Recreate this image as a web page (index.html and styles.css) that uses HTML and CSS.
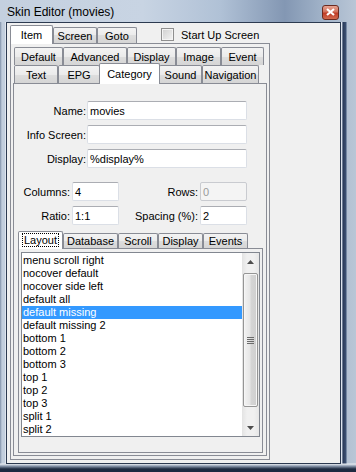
FILE: index.html
```html
<!DOCTYPE html>
<html lang="en">
<head>
  <meta charset="UTF-8">
  <title>Skin Editor (movies)</title>
  <link rel="stylesheet" href="styles.css">
</head>
<body>

<div class="window">
  <!-- Title bar -->
  <div class="titlebar">
    <span class="title">Skin Editor (movies)</span>
    <span class="close-btn">
      <svg width="9" height="8" viewBox="0 0 9 8"><path d="M1 1 L8 7 M8 1 L1 7" stroke="#fff" stroke-width="2.2"/></svg>
    </span>
  </div>

  <div class="client">
    <div class="main-tabs">
      <div class="tabstrip">
        <div class="tab tab-item selected">Item</div>
        <div class="tab tab-screen">Screen</div>
        <div class="tab tab-goto">Goto</div>
        <div class="check"><span class="check-box"></span>Start Up Screen</div>
      </div>

      <div class="panel item-panel">
        <!-- Category tab rows -->
        <div class="tabrow row-top">
          <div class="tab w-default">Default</div>
          <div class="tab w-advanced">Advanced</div>
          <div class="tab w-display">Display</div>
          <div class="tab w-image">Image</div>
          <div class="tab w-event">Event</div>
        </div>
        <div class="tabrow row-bottom">
          <div class="tab w-text">Text</div>
          <div class="tab w-epg">EPG</div>
          <div class="tab w-category selected">Category</div>
          <div class="tab w-sound">Sound</div>
          <div class="tab w-navigation">Navigation</div>
        </div>

        <div class="panel category-panel">
          <div class="fields">
            <label>Name:</label><div class="textbox">movies</div>
            <label>Info Screen:</label><div class="textbox"></div>
            <label>Display:</label><div class="textbox">%display%</div>
          </div>

          <div class="numbers">
            <label>Columns:</label><div class="textbox">4</div>
            <label>Rows:</label><div class="textbox disabled">0</div>
            <label>Ratio:</label><div class="textbox">1:1</div>
            <label>Spacing (%):</label><div class="textbox">2</div>
          </div>

          <div class="layout-tabs">
            <div class="tabrow small">
              <div class="tab w-layout selected"><span class="focus">Layout</span></div>
              <div class="tab w-database">Database</div>
              <div class="tab w-scroll">Scroll</div>
              <div class="tab w-display2">Display</div>
              <div class="tab w-events">Events</div>
            </div>
            <div class="panel layout-panel">
              <div class="listbox">
                <div class="items" id="items"></div>
                <div class="scrollbar">
                  <div class="sb-btn">
                    <svg width="7" height="4" viewBox="0 0 7 4"><path d="M0 4 L3.5 0 L7 4 Z" fill="#4d4d4d"/></svg>
                  </div>
                  <div class="sb-track">
                    <div class="sb-thumb">
                      <span class="grip"></span><span class="grip"></span><span class="grip"></span><span class="grip"></span>
                    </div>
                  </div>
                  <div class="sb-btn">
                    <svg width="7" height="4" viewBox="0 0 7 4"><path d="M0 0 L7 0 L3.5 4 Z" fill="#4d4d4d"/></svg>
                  </div>
                </div>
              </div>
            </div>
          </div>
        </div>
      </div>
    </div>
    <div class="side"></div>
  </div>
</div>

<script>
  const layouts = [
    "menu scroll right", "nocover default", "nocover side left", "default all",
    "default missing", "default missing 2", "bottom 1", "bottom 2", "bottom 3",
    "top 1", "top 2", "top 3", "split 1", "split 2"
  ];
  const selectedIndex = 4;

  const list = document.getElementById('items');
  layouts.forEach((name, i) => {
    const row = document.createElement('div');
    row.className = i === selectedIndex ? 'item selected' : 'item';
    row.textContent = name;
    list.appendChild(row);
  });
</script>

</body>
</html>
```

FILE: styles.css
```css
* {
  box-sizing: border-box;
}

body {
  margin: 0;
  width: 356px;
  height: 472px;
  overflow: hidden;
  font-family: "Liberation Sans", Arial, sans-serif;
  font-size: 11px;
  color: #000;
}

.window {
  height: 472px;
  display: flex;
  flex-direction: column;
  background:
    linear-gradient(to bottom, rgba(0,0,0,0) 463px, #e9edf2 464px, #8d9bb0 466px, #1d2a40 469px),
    linear-gradient(90deg, rgba(0,0,0,0) 342px, #2a3a58 343px, #3d5275 346px, rgba(0,0,0,0) 347px),
    linear-gradient(90deg, #7f90a8 0px, #c2cedd 2px, #c5d1e0 40%, #b3c3d7 62%, #8397b3 80%, #a2b3c9 90%, #b9c6d6 100%);
}

.titlebar {
  height: 22px;
  display: flex;
  align-items: center;
  padding-left: 7px;
  flex-shrink: 0;
  background: linear-gradient(90deg, #c4d0df, #c8d4e3 40%, #b0c1d6 62%, #8397b3 80%, #9fb1c7 90%, #b9c6d6);
}

.title {
  font-size: 12px;
  color: #000;
  padding-top: 1px;
}

.close-btn {
  margin-left: auto;
  margin-right: 17px;
  margin-top: 2px;
  width: 17px;
  height: 15px;
  border: 1px solid #6b2a20;
  border-radius: 3px;
  background: linear-gradient(#e8a493, #d0705b 45%, #bf3b26 55%, #d16a4f);
  display: flex;
  align-items: center;
  justify-content: center;
}

.client {
  flex: 1;
  margin: 0 15px 8px 6px;
  border: 1px solid #2c3a50;
  box-shadow: 1px 0 0 #dfe5ee, -1px 0 0 #dfe5ee;
  background: #f0f0f0;
  display: flex;
  padding: 0 0 3px 3px;
}

.main-tabs {
  width: 260px;
  display: flex;
  flex-direction: column;
}

.side {
  flex: 1;
}

/* tabs */

.tabstrip {
  height: 20px;
  display: flex;
  align-items: flex-end;
  flex-shrink: 0;
}

.tab {
  height: 16px;
  border: 1px solid #898c95;
  border-bottom: none;
  border-radius: 2px 2px 0 0;
  background: linear-gradient(#f3f3f3, #ebebeb 50%, #dedede 50%, #d5d5d5);
  display: flex;
  align-items: center;
  justify-content: center;
  white-space: nowrap;
}

.tab.selected {
  height: 19px;
  background: #fff;
  position: relative;
  z-index: 1;
  margin-bottom: -1px;
  padding-bottom: 1px;
}

.tab-item { width: 43px; }
.tab-screen { width: 44px; }
.tab-goto { width: 40px; }

.tabstrip .tab {
  padding-top: 1px;
}

.check {
  display: flex;
  align-items: center;
  align-self: center;
  margin-left: 24px;
  margin-top: 3px;
}

.check-box {
  width: 13px;
  height: 13px;
  border: 1px solid #8f8f8f;
  background: linear-gradient(135deg, #cfcfcf, #f4f4f4);
  box-shadow: inset 0 0 0 1px #f4f4f4;
  margin-right: 7px;
}

.panel {
  border: 1px solid #898c95;
  background: #f0f0f0;
}

.item-panel {
  flex: 1;
  display: flex;
  flex-direction: column;
  padding: 3px 2px 3px 2px;
}

.tabrow {
  display: flex;
  align-items: flex-end;
  padding-left: 1px;
  flex-shrink: 0;
}

.row-top,
.row-bottom {
  height: 18px;
}

.row-top .tab,
.row-bottom .tab {
  height: 18px;
}

.row-bottom .tab.selected {
  height: 21px;
  margin-left: -1px;
  margin-right: -1px;
}

.w-default { width: 49px; }
.w-advanced { width: 64px; }
.w-display { width: 49px; }
.w-image { width: 45px; }
.w-event { width: 43px; }
.w-text { width: 44px; }
.w-epg { width: 42px; }
.w-category { width: 61px; }
.w-sound { width: 43px; }
.w-navigation { width: 57px; }

.category-panel {
  flex: 1;
  display: flex;
  flex-direction: column;
  padding: 17px 0 0 0;
}

/* form fields */

.fields {
  display: grid;
  grid-template-columns: 72px 160px;
  column-gap: 1px;
  row-gap: 5px;
}

.fields label,
.numbers label {
  text-align: right;
  align-self: center;
}

.textbox {
  height: 19px;
  border: 1px solid #dbdfe6;
  border-top-color: #abadb3;
  border-radius: 2px;
  background: #fff;
  padding: 3px 0 0 2px;
  line-height: 12px;
}

.textbox.disabled {
  background: #f4f4f4;
  color: #9a9a9a;
  border-color: #c9cbd0;
}

.numbers {
  display: grid;
  grid-template-columns: 56px 47px 77px 47px;
  column-gap: 2px;
  row-gap: 5px;
  margin-top: 14px;
}

/* layout tabs */

.layout-tabs {
  flex: 1;
  display: flex;
  flex-direction: column;
  margin: 6px 3px 2px 4px;
}

.tabrow.small {
  height: 17px;
  padding-left: 0;
}

.tabrow.small .tab {
  height: 15px;
  padding-bottom: 1px;
}

.tabrow.small .tab.selected {
  height: 18px;
}

.w-layout { width: 45px; }
.w-database { width: 55px; }
.w-scroll { width: 40px; }
.w-display2 { width: 45px; }
.w-events { width: 45px; }

.focus {
  outline: 1px dotted #000;
  padding: 0 1px;
  line-height: 12px;
}

.layout-panel {
  flex: 1;
  padding: 3px 2px;
}

.listbox {
  height: 185px;
  border: 1px solid #828790;
  background: #fff;
  display: flex;
}

.items {
  flex: 1;
  padding-top: 1px;
}

.item {
  height: 13px;
  line-height: 13px;
  padding-left: 1px;
  white-space: nowrap;
}

.item.selected {
  background: #3399ff;
  color: #fff;
}

/* scrollbar */

.scrollbar {
  width: 17px;
  display: flex;
  flex-direction: column;
  background: linear-gradient(90deg, #e3e3e3, #f0f0f0 30%, #f0f0f0 70%, #e6e6e6);
}

.sb-btn {
  height: 17px;
  display: flex;
  align-items: center;
  justify-content: center;
}

.sb-track {
  flex: 1;
  padding: 3px 1px 12px 1px;
  display: flex;
}

.sb-thumb {
  flex: 1;
  border: 1px solid #959595;
  border-radius: 2px;
  background: linear-gradient(90deg, #f3f3f3, #e6e6e6 45%, #d5d5d5 55%, #cfcfcf);
  box-shadow: inset 0 0 0 1px #f6f6f6;
  display: flex;
  flex-direction: column;
  align-items: center;
  justify-content: center;
  gap: 1px;
}

.grip {
  width: 7px;
  height: 1px;
  background: #6b6b6b;
}
```
